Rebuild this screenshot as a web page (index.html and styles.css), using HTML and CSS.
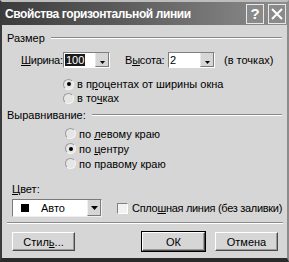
FILE: index.html
```html
<!DOCTYPE html>
<html lang="ru">
<head>
<meta charset="utf-8">
<link rel="stylesheet" href="styles.css">
</head>
<body>
<div class="dialog">
  <div class="titlebar">
    <span class="title">Свойства горизонтальной линии</span>
    <div class="tbtns">
      <span class="tbtn help">?</span>
      <span class="tbtn close"><svg width="12" height="12" viewBox="0 0 12 12"><path d="M1 1 L11 11 M11 1 L1 11" stroke="#fff" stroke-width="2"/></svg></span>
    </div>
  </div>
  <div class="body">
    <div class="group-head"><span class="gl">Размер</span><span class="rule"></span></div>
    <div class="size-row">
      <span class="lbl w-lbl"><u>Ш</u>ирина:</span>
      <div class="spin"><span class="field"><span class="sel">100</span></span><span class="spinbtn"><svg width="5" height="3" viewBox="0 0 5 3"><path d="M0 0H5L2.5 3Z" fill="#000"/></svg></span></div>
      <span class="lbl h-lbl">В<u>ы</u>сота:</span>
      <div class="spin"><span class="field">2</span><span class="spinbtn"><svg width="5" height="3" viewBox="0 0 5 3"><path d="M0 0H5L2.5 3Z" fill="#000"/></svg></span></div>
      <span class="lbl unit">(в точках)</span>
    </div>
    <div class="radios r-size">
      <div class="radio on"><span class="dot"></span><span class="rt">в п<u>р</u>оцентах от ширины окна</span></div>
      <div class="radio"><span class="dot"></span><span class="rt">в то<u>ч</u>ках</span></div>
    </div>
    <div class="group-head g2"><span class="gl">Выравнивание:</span><span class="rule"></span></div>
    <div class="radios r-align">
      <div class="radio"><span class="dot"></span><span class="rt">по <u>л</u>евому краю</span></div>
      <div class="radio on"><span class="dot"></span><span class="rt">по <u>ц</u>ентру</span></div>
      <div class="radio"><span class="dot"></span><span class="rt">по правому краю</span></div>
    </div>
    <div class="color-lbl"><u>Ц</u>вет:</div>
    <div class="color-row">
      <div class="combo"><span class="swatch"></span><span class="cval">Авто</span><span class="cbtn"><svg width="7" height="4" viewBox="0 0 7 4"><path d="M0 0H7L3.5 4Z" fill="#000"/></svg></span></div>
      <div class="check"><span class="box"></span><span class="ct">Спло<u>ш</u>ная линия (без заливки)</span></div>
    </div>
    <div class="sep"></div>
    <div class="buttons">
      <span class="btn"><span>Стил<u>ь</u>...</span></span>
      <span class="spacer"></span>
      <span class="btn default">ОК</span>
      <span class="btn">Отмена</span>
    </div>
  </div>
</div>
</body>
</html>
```

FILE: styles.css
```css
* { box-sizing: border-box; }
html, body { margin: 0; padding: 0; }
body {
  width: 289px;
  height: 262px;
  overflow: hidden;
  background: #d4d4d4;
  font-family: "Liberation Sans", Arial, sans-serif;
  font-size: 11px;
  color: #000;
}
.dialog {
  width: 289px;
  height: 262px;
  border-left: 2px solid #3a3a3a;
  border-top: 2px solid #bdbdbd;
  border-right: 2px solid #8c8c8c;
  border-bottom: 4px solid #2a2a2a;
  background: #d6d6d6;
  display: flex;
  flex-direction: column;
}
.titlebar {
  height: 23px;
  background: linear-gradient(to right, #3c3c3c 0%, #5e5e5e 45%, #8e8e8e 100%);
  display: flex;
  align-items: center;
  padding-left: 3px;
  padding-right: 1px;
}
.title {
  color: #fff;
  font-weight: bold;
  font-size: 12px;
  letter-spacing: -0.4px;
  flex: 1;
  white-space: nowrap;
}
.tbtns { display: flex; gap: 4px; }
.tbtn {
  width: 18px;
  height: 20px;
  border: 1px solid #e8e8e8;
  background: #8a8a8a;
  color: #fff;
  font-weight: bold;
  font-size: 15px;
  display: flex;
  align-items: center;
  justify-content: center;
}
.body {
  flex: 1;
  padding: 6px 4px 0 5px;
  display: flex;
  flex-direction: column;
  white-space: nowrap;
}
.group-head {
  display: flex;
  align-items: center;
  height: 13px;
  gap: 6px;
}
.group-head .rule {
  flex: 1;
  height: 2px;
  border-top: 1px solid #8a8a8a;
  border-bottom: 1px solid #fff;
  margin-right: 1px;
}
.size-row {
  margin-top: 8px;
  height: 16px;
  display: flex;
  align-items: center;
}
.w-lbl { margin-left: 14px; width: 42px; letter-spacing: -0.3px; }
.h-lbl { margin-left: 15px; width: 43px; letter-spacing: -0.2px; }
.unit { margin-left: 9px; }
.spin {
  display: flex;
  height: 16px;
  width: 47px;
  border-top: 1px solid #808080;
  border-left: 1px solid #808080;
  border-bottom: 1px solid #fff;
  border-right: 1px solid #fff;
  background: #fff;
}
.field {
  flex: 1;
  display: flex;
  align-items: center;
  padding-left: 1px;
  line-height: 12px;
}
.sel { background: #1a1a1a; color: #fff; padding: 0 1px; }
.spinbtn {
  width: 14px;
  background: #d6d6d6;
  border-left: 1px solid #e8e8e8;
  border-right: 1px solid #7a7a7a;
  border-bottom: 1px solid #7a7a7a;
  display: flex;
  align-items: flex-end;
  justify-content: center;
  padding-bottom: 2px;
}
.radios { display: flex; flex-direction: column; padding-left: 56px; }
.r-size { margin-top: 9px; }
.r-align { margin-top: 5px; padding-left: 58px; }
.radio {
  height: 14px;
  display: flex;
  align-items: center;
  gap: 3px;
}
.r-align .radio { height: 15px; }
.dot {
  width: 11px;
  height: 11px;
  border-radius: 50%;
  border-top: 1px solid #9a9a9a;
  border-left: 1px solid #9a9a9a;
  border-bottom: 1px solid #f4f4f4;
  border-right: 1px solid #f4f4f4;
  background: #e6e6e6;
  display: flex;
  align-items: center;
  justify-content: center;
}
.radio.on .dot::after {
  content: "";
  width: 4px;
  height: 4px;
  border-radius: 50%;
  background: #000;
}
.g2 { margin-top: 3px; }
.color-lbl { margin-top: 12px; margin-left: 5px; height: 13px; line-height: 13px; }
.color-row {
  margin-top: 3px;
  display: flex;
  align-items: center;
  padding-left: 5px;
}
.combo {
  width: 90px;
  height: 18px;
  background: #fff;
  border-top: 1px solid #7a7a7a;
  border-left: 1px solid #7a7a7a;
  border-bottom: 1px solid #f0f0f0;
  border-right: 1px solid #f0f0f0;
  display: flex;
  align-items: center;
}
.swatch { width: 8px; height: 8px; background: #000; margin-left: 8px; }
.cval { margin-left: 12px; flex: 1; }
.cbtn {
  width: 14px;
  height: 16px;
  background: #d6d6d6;
  border-left: 1px solid #f0f0f0;
  border-right: 1px solid #7a7a7a;
  border-bottom: 1px solid #7a7a7a;
  display: flex;
  align-items: center;
  justify-content: center;
}
.check {
  margin-left: 15px;
  display: flex;
  align-items: center;
  gap: 4px;
}
.ct { letter-spacing: -0.3px; }
.box {
  width: 11px;
  height: 11px;
  background: #f2f2f2;
  border-top: 1px solid #808080;
  border-left: 1px solid #808080;
  border-bottom: 1px solid #fff;
  border-right: 1px solid #fff;
}
.sep {
  margin-top: 5px;
  height: 2px;
  border-top: 1px solid #8a8a8a;
  border-bottom: 1px solid #fff;
}
.buttons {
  margin-top: 8px;
  display: flex;
  padding-left: 5px;
  padding-right: 5px;
  gap: 10px;
}
.spacer { width: 49px; }
.btn {
  width: 66px;
  height: 19px;
  background: #d6d6d6;
  border-top: 1px solid #fff;
  border-left: 1px solid #fff;
  border-bottom: 1px solid #4a4a4a;
  border-right: 1px solid #4a4a4a;
  box-shadow: inset -1px -1px 0 #9a9a9a;
  display: flex;
  align-items: center;
  justify-content: center;
}
.btn.default { outline: 1px solid #000; }
```
